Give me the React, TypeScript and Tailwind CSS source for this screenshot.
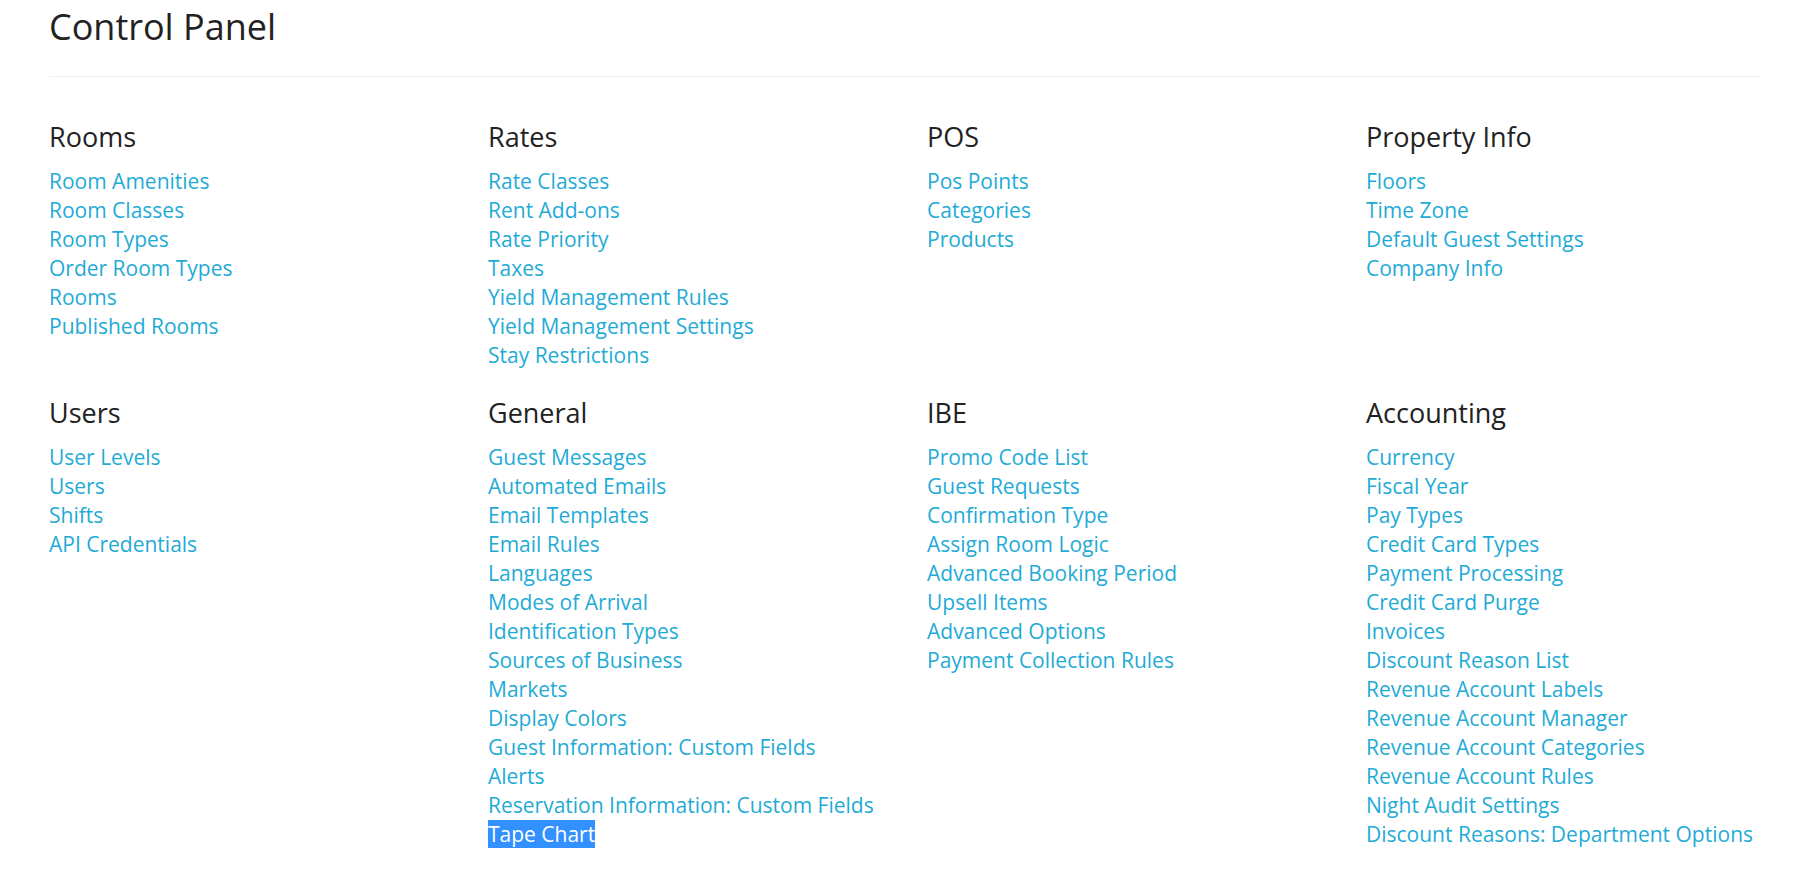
import React from "react";

type Section = { title: string; links: string[] };

const row1: Section[] = [
  {
    title: "Rooms",
    links: ["Room Amenities", "Room Classes", "Room Types", "Order Room Types", "Rooms", "Published Rooms"],
  },
  {
    title: "Rates",
    links: [
      "Rate Classes",
      "Rent Add-ons",
      "Rate Priority",
      "Taxes",
      "Yield Management Rules",
      "Yield Management Settings",
      "Stay Restrictions",
    ],
  },
  { title: "POS", links: ["Pos Points", "Categories", "Products"] },
  {
    title: "Property Info",
    links: ["Floors", "Time Zone", "Default Guest Settings", "Company Info"],
  },
];

const row2: Section[] = [
  { title: "Users", links: ["User Levels", "Users", "Shifts", "API Credentials"] },
  {
    title: "General",
    links: [
      "Guest Messages",
      "Automated Emails",
      "Email Templates",
      "Email Rules",
      "Languages",
      "Modes of Arrival",
      "Identification Types",
      "Sources of Business",
      "Markets",
      "Display Colors",
      "Guest Information: Custom Fields",
      "Alerts",
      "Reservation Information: Custom Fields",
      "Tape Chart",
    ],
  },
  {
    title: "IBE",
    links: [
      "Promo Code List",
      "Guest Requests",
      "Confirmation Type",
      "Assign Room Logic",
      "Advanced Booking Period",
      "Upsell Items",
      "Advanced Options",
      "Payment Collection Rules",
    ],
  },
  {
    title: "Accounting",
    links: [
      "Currency",
      "Fiscal Year",
      "Pay Types",
      "Credit Card Types",
      "Payment Processing",
      "Credit Card Purge",
      "Invoices",
      "Discount Reason List",
      "Revenue Account Labels",
      "Revenue Account Manager",
      "Revenue Account Categories",
      "Revenue Account Rules",
      "Night Audit Settings",
      "Discount Reasons: Department Options",
    ],
  },
];

function SectionBlock({ s }: { s: Section }) {
  return (
    <div className="flex flex-col">
      <h3 className="text-[27px] leading-[30px] font-normal text-[#222]">{s.title}</h3>
      <ul className="mt-[15px] flex flex-col">
        {s.links.map((l) => (
          <li key={l} className="text-[21px] leading-[29px] whitespace-nowrap">
            {l === "Tape Chart" ? (
              <a href="#" className="bg-[#3390ff] text-white">
                {l}
              </a>
            ) : (
              <a href="#" className="text-[#1fabd6]">
                {l}
              </a>
            )}
          </li>
        ))}
      </ul>
    </div>
  );
}

export default function App() {
  return (
    <div className="min-h-screen bg-white font-['Open_Sans',sans-serif]">
      <div className="pl-[49px] pt-[6px] pb-[20px]">
        <h1 className="text-[36px] leading-[42px] font-normal text-[#222]">Control Panel</h1>
        <div className="mt-[28px] h-px w-[1711px] bg-[#eeeeee]" />
        <div className="mt-[45px] grid grid-cols-[439px_439px_439px_1fr]">
          {row1.map((s) => (
            <SectionBlock key={s.title} s={s} />
          ))}
        </div>
        <div className="mt-[28px] grid grid-cols-[439px_439px_439px_1fr]">
          {row2.map((s) => (
            <SectionBlock key={s.title} s={s} />
          ))}
        </div>
      </div>
    </div>
  );
}
